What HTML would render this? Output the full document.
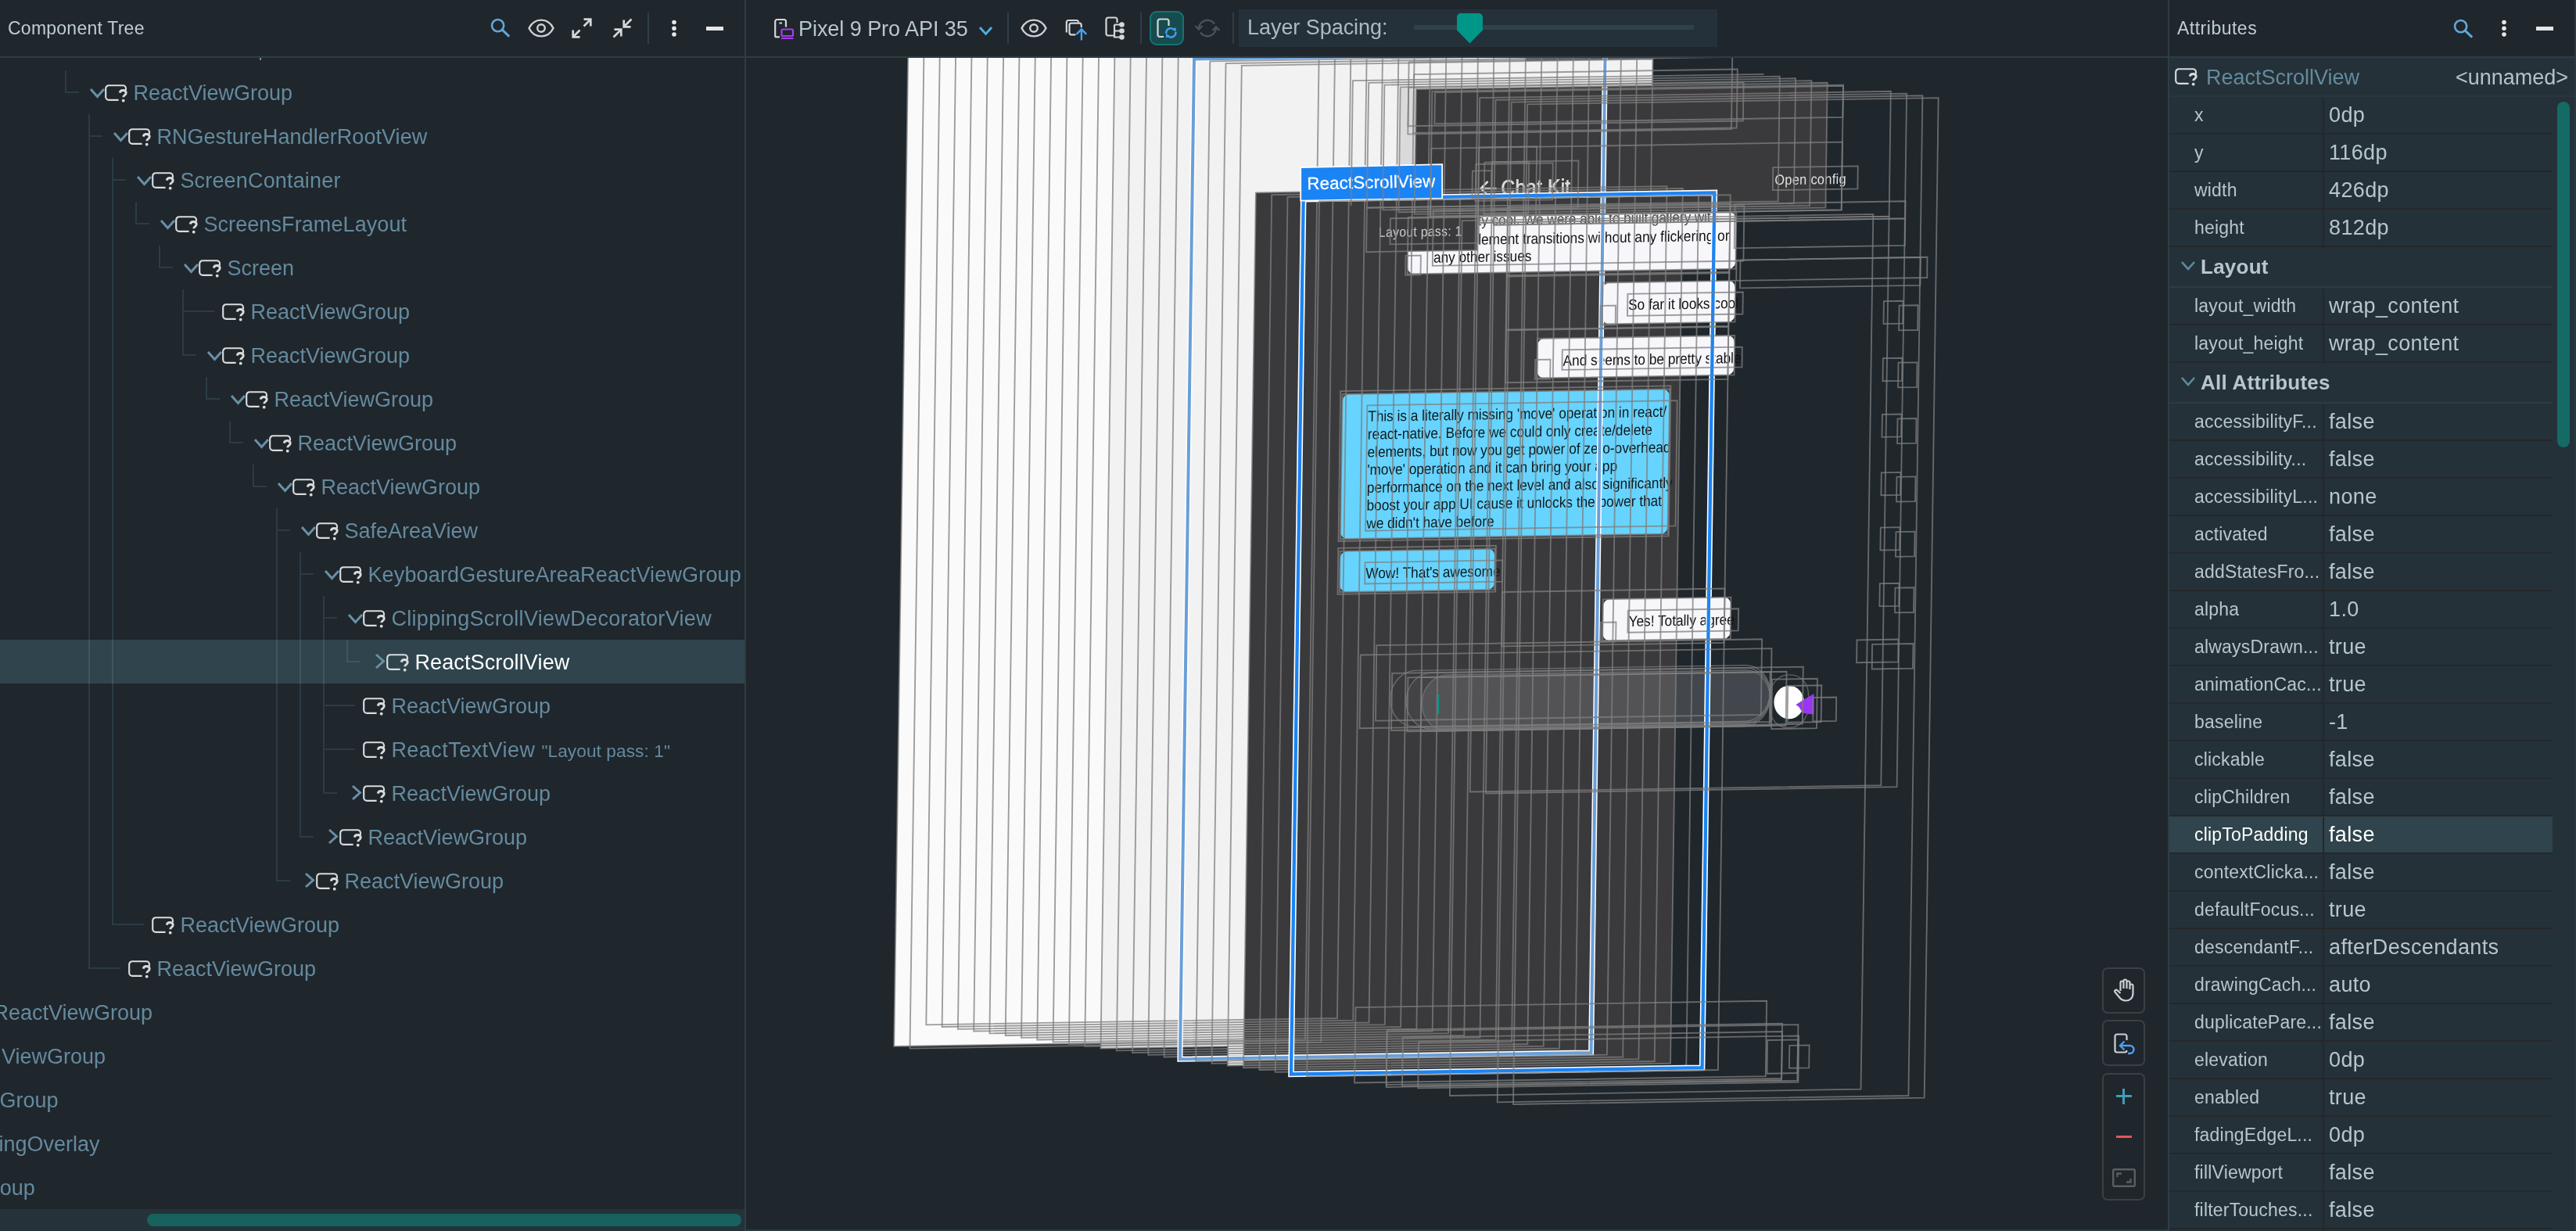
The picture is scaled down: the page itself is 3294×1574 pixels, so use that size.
<!DOCTYPE html><html><head><meta charset="utf-8"><title>Layout Inspector</title><style>

*{box-sizing:border-box;margin:0;padding:0}
html,body{width:3294px;height:1574px;overflow:hidden;background:#1f262c}
body{position:relative;font-family:"Liberation Sans",sans-serif;color:#b3c2ca;font-size:27px;letter-spacing:0}
.abs{position:absolute}
#left{left:0;top:0;width:952px;height:1574px;overflow:hidden}
.hdr{position:absolute;left:0;top:0;height:74px;width:100%;border-bottom:2px solid #2d3d47}
.hdr .t{position:absolute;top:0;line-height:72px;font-size:23px;color:#bfcdd4}
.vdiv{position:absolute;top:0;width:2px;height:1574px;background:#2d3d47}
.row{position:absolute;left:0;width:952px;height:56px;line-height:58px;white-space:nowrap;color:#648a9e}
.row.sel{background:#2f444c;color:#fff}
.row span{position:absolute;top:0}
.row .sm{font-size:22.600px;letter-spacing:.1px}
.gl{position:absolute;background:#2b3c45}
svg{position:absolute;overflow:visible}
#right{left:2774px;top:0;width:520px;height:1574px;background:#243138;overflow:hidden}
#right .hdr{background:#1f262c}
.trow{position:absolute;left:0;width:490px;height:48px;border-bottom:2px solid #26272a}
.trow .n{position:absolute;left:32px;top:0;line-height:46px;font-size:23px;letter-spacing:.2px;white-space:nowrap;color:#b7c5cc}
.trow .v{position:absolute;left:204px;top:0;line-height:46px;font-size:27px;letter-spacing:.36px;white-space:nowrap;color:#b7c5cc}
.trow.sel{background:#2f444c}
.trow.sel .n,.trow.sel .v{color:#fff}
.thead{position:absolute;left:0;width:490px;height:52px;border-bottom:2px solid #2e3b43}
.thead b{position:absolute;left:40px;top:0;line-height:50px;font-size:26px;letter-spacing:.25px;color:#b7c6ce}
.cdiv{position:absolute;left:196px;width:2px;background:#26272a}

</style></head><body><div id="w" style="position:absolute;left:0;top:0;width:3294px;height:1574px;will-change:transform">
<svg style="left:954px;top:74px" width="1818" height="1500" viewBox="954 74 1818 1500">
<defs><clipPath id="cv"><rect x="954" y="74" width="1818" height="1500"/></clipPath></defs>
<g clip-path="url(#cv)">
<defs><clipPath id="tc0"><polygon points="1832.9,266.8 2230.4,260.5 2229.3,341.8 1831.7,348.1"/></clipPath><clipPath id="tc1"><polygon points="2081.4,373.1 2228.8,370.7 2228.3,409.7 2080.9,412.1"/></clipPath><clipPath id="tc2"><polygon points="1997.9,444.5 2227.9,440.9 2227.3,477.5 1997.4,481.2"/></clipPath><clipPath id="tc3"><polygon points="1748.4,515.7 2144.8,509.4 2142.4,680.7 1746,686.9"/></clipPath><clipPath id="tc4"><polygon points="1745.6,716.4 1921.4,713.7 1920.9,752 1745.1,754.7"/></clipPath><clipPath id="tc5"><polygon points="2081.9,777.8 2223.1,775.6 2222.6,814.7 2081.3,816.9"/></clipPath></defs>
<polygon points="1161.8,26.1 1687.4,17.8 1668.9,1329.6 1143.2,1337.9" fill="#fafafa"/>
<polygon points="1425.5,61.9 1951.2,53.6 1933.1,1332.2 1407.5,1340.5" fill="#f2f2f2"/>
<polygon points="1587.8,83.8 2113.5,75.6 2095.4,1354.2 1569.8,1362.5" fill="#f2f2f2"/>
<polygon points="1605.9,246.4 2131.5,238.1 2115.7,1357 1590.1,1365.3" fill="#3a3a3c"/>
<polygon points="1626.2,249.2 2151.8,240.9 2136,1359.7 1610.4,1368" fill="#3a3a3c"/>
<path d="M1809.3 277.9L2211.8 271.5C2216.5 271.4 2220.3 275.7 2220.3 281L2219.5 334.1C2219.4 339.4 2215.5 343.8 2210.7 343.8L1808.3 350.2C1803.5 350.3 1799.7 346 1799.8 340.7L1800.5 287.6C1800.6 282.3 1804.5 277.9 1809.3 277.9Z" fill="#f6f6fb"/>
<path d="M2058.2 361.4L2210.5 359C2215.3 358.9 2219.1 363.2 2219 368.5L2218.5 402C2218.5 407.3 2214.5 411.7 2209.8 411.8L2057.4 414.2C2052.7 414.3 2048.9 410 2048.9 404.7L2049.4 371.2C2049.5 365.9 2053.4 361.5 2058.2 361.4Z" fill="#f6f6fb"/>
<path d="M1974.6 432.8L2209.5 429.1C2214.3 429.1 2218.1 433.3 2218 438.6L2217.6 469.8C2217.5 475.1 2213.6 479.5 2208.8 479.6L1973.9 483.3C1969.2 483.4 1965.4 479.1 1965.4 473.8L1965.9 442.6C1965.9 437.3 1969.9 432.9 1974.6 432.8Z" fill="#f6f6fb"/>
<path d="M1725.2 504L2126.5 497.7C2131.2 497.6 2135 501.9 2134.9 507.2L2132.6 672.9C2132.5 678.3 2128.6 682.7 2123.8 682.7L1722.6 689.1C1717.8 689.1 1714 684.9 1714.1 679.6L1716.4 513.8C1716.5 508.5 1720.4 504.1 1725.2 504Z" fill="#66d4ff"/>
<path d="M1722.4 704.8L1903.1 701.9C1907.9 701.8 1911.7 706.1 1911.6 711.4L1911.1 744.2C1911 749.6 1907.1 753.9 1902.4 754L1721.6 756.9C1716.9 756.9 1713.1 752.7 1713.1 747.3L1713.6 714.6C1713.7 709.2 1717.6 704.8 1722.4 704.8Z" fill="#66d4ff"/>
<path d="M2058.6 766.1L2204.8 763.8C2209.6 763.8 2213.4 768 2213.3 773.3L2212.8 807C2212.8 812.3 2208.8 816.7 2204.1 816.7L2057.9 819.1C2053.1 819.1 2049.3 814.9 2049.4 809.5L2049.9 775.9C2049.9 770.6 2053.9 766.2 2058.6 766.1Z" fill="#f6f6fb"/>
<g clip-path="url(#tc0)"><text transform="matrix(1.232 -0.0194 -0.0194 1.3779 1729.9 103.1)" x="131.7" y="136.3" font-size="14" fill="#444" textLength="249.7" lengthAdjust="spacing" font-family="Liberation Sans,sans-serif">ty cool. We were able to built gallery with</text></g>
<g clip-path="url(#tc0)"><text transform="matrix(1.232 -0.0194 -0.0194 1.3779 1729.9 103.1)" x="124.7" y="154" font-size="14" fill="#111" textLength="268.6" lengthAdjust="spacing" font-family="Liberation Sans,sans-serif">element transitions without any flickering or</text></g>
<g clip-path="url(#tc0)"><text transform="matrix(1.232 -0.0194 -0.0194 1.3779 1729.9 103.1)" x="86.3" y="170.1" font-size="14" fill="#111" font-family="Liberation Sans,sans-serif">any other issues</text></g>
<g clip-path="url(#tc1)"><text transform="matrix(1.232 -0.0194 -0.0194 1.3779 1729.9 103.1)" x="289.3" y="216.8" font-size="14" fill="#111" font-family="Liberation Sans,sans-serif">So far it looks cool</text></g>
<g clip-path="url(#tc2)"><text transform="matrix(1.232 -0.0194 -0.0194 1.3779 1729.9 103.1)" x="222.3" y="267.7" font-size="14" fill="#111" font-family="Liberation Sans,sans-serif">And seems to be pretty stable</text></g>
<g clip-path="url(#tc3)"><text transform="matrix(1.232 -0.0194 -0.0194 1.3779 1729.9 103.1)" x="20.6" y="316.5" font-size="14" fill="#10181c" font-family="Liberation Sans,sans-serif">This is a literally missing 'move' operation in react/</text></g>
<g clip-path="url(#tc3)"><text transform="matrix(1.232 -0.0194 -0.0194 1.3779 1729.9 103.1)" x="20.6" y="333.1" font-size="14" fill="#10181c" font-family="Liberation Sans,sans-serif">react-native. Before we could only create/delete</text></g>
<g clip-path="url(#tc3)"><text transform="matrix(1.232 -0.0194 -0.0194 1.3779 1729.9 103.1)" x="20.6" y="349.6" font-size="14" fill="#10181c" font-family="Liberation Sans,sans-serif">elements, but now you get power of zero-overhead</text></g>
<g clip-path="url(#tc3)"><text transform="matrix(1.232 -0.0194 -0.0194 1.3779 1729.9 103.1)" x="20.6" y="366.1" font-size="14" fill="#10181c" font-family="Liberation Sans,sans-serif">'move' operation and it can bring your app</text></g>
<g clip-path="url(#tc3)"><text transform="matrix(1.232 -0.0194 -0.0194 1.3779 1729.9 103.1)" x="20.6" y="382.7" font-size="14" fill="#10181c" font-family="Liberation Sans,sans-serif">performance on the next level and also significantly</text></g>
<g clip-path="url(#tc3)"><text transform="matrix(1.232 -0.0194 -0.0194 1.3779 1729.9 103.1)" x="20.6" y="399.2" font-size="14" fill="#10181c" font-family="Liberation Sans,sans-serif">boost your app UI cause it unlocks the power that</text></g>
<g clip-path="url(#tc3)"><text transform="matrix(1.232 -0.0194 -0.0194 1.3779 1729.9 103.1)" x="20.6" y="415.8" font-size="14" fill="#10181c" font-family="Liberation Sans,sans-serif">we didn't have before</text></g>
<g clip-path="url(#tc4)"><text transform="matrix(1.232 -0.0194 -0.0194 1.3779 1729.9 103.1)" x="20.6" y="462.2" font-size="14" fill="#10181c" font-family="Liberation Sans,sans-serif">Wow! That's awesome</text></g>
<g clip-path="url(#tc5)"><text transform="matrix(1.232 -0.0194 -0.0194 1.3779 1729.9 103.1)" x="294.3" y="510.6" font-size="14" fill="#111" font-family="Liberation Sans,sans-serif">Yes! Totally agree</text></g>
<polygon points="1747.9,265.7 1889.6,263.4 1888.8,319.9 1747.1,322.2" fill="#3a3a3c"/>
<text transform="matrix(1.232 -0.0194 -0.0194 1.3779 1750.2 105.8)" x="12.500" y="143.300" font-size="12.800" fill="#cfcfcf" font-family="Liberation Sans,sans-serif" letter-spacing=".25">Layout pass: 1</text>
<path d="M1810.3 857.4L2231.8 850.7C2249.4 850.4 2263.5 866.2 2263.2 885.9L2263.2 886.2C2262.9 905.9 2248.4 922.1 2230.8 922.4L1809.2 929C1791.6 929.3 1777.6 913.6 1777.8 893.8L1777.8 893.6C1778.1 873.9 1792.6 857.7 1810.3 857.4Z" fill="none" stroke="#6d6d70" stroke-width="1.300"/>
<polygon points="1790.7,111.3 1812.9,111 1811.5,210.2 1789.3,210.6" fill="#dadadc"/>
<path d="M1830.5 860.1L2231.8 853.8C2249.4 853.5 2263.5 869.3 2263.2 889L2263.2 889.3C2262.9 909 2248.4 925.2 2230.8 925.4L1829.5 931.8C1811.9 932.1 1797.9 916.3 1798.1 896.6L1798.1 896.3C1798.4 876.6 1812.9 860.4 1830.5 860.1Z" fill="rgba(130,130,135,.14)" stroke="#6d6d70" stroke-width="1.300"/>
<polygon points="1811,114.1 2336.7,105.8 2334.4,265.6 1808.8,273.9" fill="#3a3a3c"/>
<path d="M1850.8 862.9L2231.8 856.9C2249.4 856.6 2263.5 872.3 2263.2 892.1L2263.2 892.3C2262.9 912 2248.4 928.2 2230.8 928.5L1849.8 934.5C1832.2 934.8 1818.1 919.1 1818.4 899.3L1818.4 899.1C1818.7 879.4 1833.2 863.2 1850.8 862.9Z" fill="rgba(130,130,135,.26)" stroke="#6d6d70" stroke-width="1.300"/>
<path d="M2287 862.9L2289.5 862.8C2302.4 862.6 2312.7 874.2 2312.5 888.7L2312.3 903.8C2312.1 918.3 2301.4 930.2 2288.5 930.4L2286 930.4C2273.1 930.6 2262.8 919.1 2263 904.6L2263.2 889.4C2263.4 875 2274.1 863.1 2287 862.9Z" fill="none" stroke="#606063" stroke-width="1.300"/>
<path d="M1839.5 887.9L1839.2 912.7" stroke="#009688" stroke-width="2"/>
<ellipse cx="2287.7" cy="898" rx="19.300" ry="21.300" fill="#fff"/>
<path d="M2319.4 887L2319.4 913.5L2305.4 912L2300.4 904L2296.4 901L2304.4 896Z" fill="#9b35f5"/>
<text transform="matrix(1.232 -0.0194 -0.0194 1.3779 1851.6 119.6)" x="340.400" y="89.500" font-size="13.300" fill="#e0e0e0" font-family="Liberation Sans,sans-serif" letter-spacing=".25">Open config</text>
<text transform="matrix(1.232 -0.0194 -0.0194 1.3779 1871.9 122.3)" x="40" y="92.900" font-size="20" fill="#dcdcdc" stroke="#dcdcdc" stroke-width=".5" font-family="Liberation Sans,sans-serif" letter-spacing=".1">Chat Kit</text>
<path d="M1913.6 241H1893.6M1902.6 232L1893.6 241L1902.6 250" fill="none" stroke="#dcdcdc" stroke-width="2.500"/>
<g fill="none" stroke="#7e7e7e" stroke-opacity=".77" stroke-width="1.850"><polygon points="1161.8,26.1 1687.4,17.8 1668.9,1329.6 1143.2,1337.9"/><polygon points="1182,28.9 1707.7,20.6 1689.2,1332.3 1163.5,1340.6"/><polygon points="1202.3,31.6 1728,23.3 1709.9,1302 1184.3,1310.3"/><polygon points="1222.6,34.4 1748.3,26.1 1730.2,1304.7 1204.6,1313"/><polygon points="1242.9,37.1 1768.6,28.8 1750.5,1307.5 1224.9,1315.8"/><polygon points="1263.2,39.9 1788.9,31.6 1770.8,1310.2 1245.2,1318.5"/><polygon points="1283.5,42.6 1809.1,34.3 1791.1,1313 1265.4,1321.3"/><polygon points="1303.8,45.4 1829.4,37.1 1811.4,1315.7 1285.7,1324"/><polygon points="1324.1,48.1 1849.7,39.8 1831.7,1318.5 1306,1326.8"/><polygon points="1344.4,50.9 1870,42.6 1852,1321.2 1326.3,1329.5"/><polygon points="1364.7,53.6 1890.3,45.3 1872.3,1324 1346.6,1332.3"/><polygon points="1384.9,56.4 1910.6,48.1 1892.5,1326.7 1366.9,1335"/><polygon points="1405.2,59.1 1930.9,50.8 1912.8,1329.5 1387.2,1337.8"/><polygon points="1425.5,61.9 1951.2,53.6 1933.1,1332.2 1407.5,1340.5"/><polygon points="1445.8,64.6 1971.5,56.3 1953.4,1335 1427.8,1343.3"/><polygon points="1466.1,67.3 1991.8,59.1 1973.7,1337.7 1448.1,1346"/><polygon points="1486.4,70.1 2012,61.8 1994,1340.5 1468.3,1348.8"/><polygon points="1506.7,72.8 2032.3,64.6 2014.3,1343.2 1488.6,1351.5"/><polygon points="1527,75.6 2052.6,67.3 2034.6,1346 1508.9,1354.3"/></g>
<polygon points="1527,75.6 2052.6,67.3 2034.6,1346 1508.9,1354.3" fill="none" stroke="#fff" stroke-width="7"/>
<polygon points="1527,75.6 2052.6,67.3 2034.6,1346 1508.9,1354.3" fill="none" stroke="#6a9fd8" stroke-width="4"/>
<g fill="none" stroke="#7e7e7e" stroke-opacity=".77" stroke-width="1.850"><polygon points="1547.3,78.3 2072.9,70.1 2054.9,1348.7 1529.2,1357"/><polygon points="1567.5,81.1 2093.2,72.8 2075.2,1351.5 1549.5,1359.8"/><polygon points="1587.8,83.8 2113.5,75.6 2095.4,1354.2 1569.8,1362.5"/><polygon points="1605.9,246.4 2131.5,238.1 2115.7,1357 1590.1,1365.3"/><polygon points="1626.2,249.2 2151.8,240.9 2136,1359.7 1610.4,1368"/><polygon points="1646.5,251.9 2172.1,243.6 2156.3,1362.5 1630.7,1370.8"/><polygon points="1666.7,254.7 2192.4,246.4 2176.6,1365.2 1651,1373.5"/></g>
<polygon points="1666.7,254.7 2192.4,246.4 2176.6,1365.2 1651,1373.5" fill="none" stroke="#fff" stroke-width="7.500"/>
<polygon points="1666.7,254.7 2192.4,246.4 2176.6,1365.2 1651,1373.5" fill="none" stroke="#1b84f5" stroke-width="4.300"/>
<path d="M1663.2 256.7L1663.2 214.2L1844.2 210.2L1844.2 253.7Z" fill="#1b84f5" stroke="#fff" stroke-width="1.800"/>
<text x="1671.7" y="242.4" transform="rotate(-1.100 1663.2 252.7)" font-size="22.200" fill="#fff" stroke="#fff" stroke-width=".3" font-family="Liberation Sans,sans-serif" letter-spacing=".2">ReactScrollView</text>
<g fill="none" stroke="#7e7e7e" stroke-opacity=".77" stroke-width="1.850"><polygon points="1687,257.4 2212.7,249.1 2196.9,1368 1671.2,1376.3"/><polygon points="1801.6,79.3 2215.2,72.8 2213.9,165.1 1800.3,171.6"/><polygon points="1928.4,264.6 2212.5,260.2 2211.3,349 1927.1,353.5"/><polygon points="1927.1,352.1 2211.3,347.7 2210.3,417 1926.1,421.5"/><polygon points="1926.1,422.3 2210.3,417.8 2209.4,484.8 1925.2,489.2"/><polygon points="1921.4,757 2205.6,752.5 2204.6,821.9 1920.4,826.4"/><polygon points="1808.2,95.1 2221.8,88.5 2220.7,163.5 1807.1,170"/><polygon points="1797.5,327 1816.9,326.6 1816.5,351.4 1797.2,351.8"/><polygon points="1800.7,278 2220.4,271.4 2219.4,343.7 1799.7,350.3"/><polygon points="2046.7,390.9 2066,390.6 2065.7,415.4 2046.3,415.7"/><polygon points="2049.5,361.5 2219.2,358.9 2218.4,411.6 2048.8,414.3"/><polygon points="1963.2,460 1982.5,459.7 1982.2,484.5 1962.8,484.8"/><polygon points="1966,433 2218.2,429 2217.5,479.4 1965.3,483.4"/><polygon points="1714.2,500.1 2136.4,493.4 2133.7,685.3 1711.5,692"/><polygon points="1716.6,504.1 2135.1,497.5 2132.5,682.6 1714,689.2"/><polygon points="1711.3,700.8 1913,697.6 1912.2,756.6 1710.5,759.8"/><polygon points="1713.7,704.9 1911.7,701.8 1911,753.9 1713,757"/><polygon points="2047.1,795.8 2066.5,795.5 2066.1,820.3 2046.8,820.6"/><polygon points="2050,766.3 2213.4,763.7 2212.7,816.6 2049.2,819.2"/><polyline points="1727.6,262.9 1729.9,103.1 2255.5,94.8"/><polygon points="1801.2,112 2229.6,105.3 2228.9,154.5 1800.5,161.2"/><polygon points="1832.8,269.5 2230.4,263.3 2229.4,333.5 1831.8,339.8"/><polygon points="2081.4,375.8 2228.8,373.5 2228.4,401.5 2081,403.8"/><polygon points="1997.8,447.3 2227.8,443.6 2227.5,469.3 1997.5,472.9"/><polygon points="1748.4,518.4 2144.7,512.2 2142.5,672.4 1746.1,678.7"/><polygon points="1745.6,719.2 1921.4,716.4 1921,743.7 1745.2,746.5"/><polygon points="2081.8,780.6 2223.1,778.3 2222.7,806.4 2081.4,808.7"/><polygon points="1750.2,105.8 2275.8,97.6 2273.6,257.4 1747.9,265.7"/><polygon points="1733.5,1288.1 2259.1,1279.8 2257.8,1376.2 1732.1,1384.5"/><polygon points="1747.9,265.7 1889.6,263.4 1888.8,319.9 1747.1,322.2"/><polygon points="1739.8,837.5 2265.5,829.2 2264.2,922.9 1738.5,931.2"/><polygon points="1770.4,108.6 2296.1,100.3 2293.9,260.1 1768.2,268.4"/><polygon points="1773.7,1316.7 2279,1308.7 2278.1,1379 1772.7,1387"/><polygon points="1777.9,279.3 1891.2,277.5 1890.8,310.6 1777.4,312.4"/><polygon points="1760.3,825.1 2253.1,817.3 2251.8,913.8 1759,921.6"/><polygon points="1790.7,111.3 2316.4,103.1 2314.1,262.9 1788.5,271.2"/><polygon points="1773.7,1318.4 2299.4,1310.1 2298.3,1381.7 1772.7,1390"/><polygon points="2260.1,1330 2299.1,1329.4 2298.5,1372.1 2259.5,1372.7"/><polygon points="1780.2,860.9 2305.8,852.6 2304.8,925.7 1779.1,934"/><polygon points="1811,114.1 2336.7,105.8 2334.4,265.6 1808.8,273.9"/><polygon points="1793.9,1326.7 2279,1319 2278.1,1381 1793,1388.7"/><polygon points="2288.3,1336.8 2313.6,1336.4 2313.2,1365.3 2287.9,1365.7"/><polygon points="1800.4,866.4 2284.6,858.8 2283.6,927.7 1799.4,935.3"/><polygon points="1817.7,866.2 2263.6,859.1 2262.7,928 1816.7,935.1"/><polygon points="2266,868.7 2323.9,867.8 2323,931.2 2265.1,932.1"/><polygon points="1831.3,116.8 2357,108.6 2354.7,268.4 1829.1,276.7"/><polygon points="1814.2,1332.2 2300.2,1324.5 2299.4,1383.7 1813.3,1391.4"/><polygon points="1835,118.2 2357,109.9 2356.4,149.9 1834.4,158.1"/><polygon points="1830.3,189.9 2355.9,181.6 2354.7,268.4 1829.1,276.7"/><polygon points="2286.2,877 2329.3,876.3 2328.6,923.2 2285.5,923.8"/><polygon points="1887.3,210 1985.8,208.4 1985.2,255.3 1886.6,256.8"/><polygon points="2267.3,214.2 2375.8,212.4 2375.4,241.4 2266.9,243.1"/><polygon points="2318.6,891.9 2348.2,891.5 2347.8,921.8 2318.2,922.3"/><polygon points="1869.6,282.2 2395.3,273.9 2379.5,1392.7 1853.9,1401"/><polygon points="1907.7,207.2 2018.5,205.4 2017.7,266.1 1906.8,267.8"/><polygon points="1882.9,218.6 1907.5,218.2 1907,254 1882.4,254.4"/><polygon points="1892.2,125.1 2417.8,116.8 2415.6,276.6 1889.9,284.9"/><polygon points="1889.9,284.9 2415.6,276.6 2405.3,1004.2 1879.7,1012.5"/><polygon points="1891.3,188.5 1965.2,187.3 1963.9,283.8 1889.9,284.9"/><polygon points="1898.4,207.7 1955.1,206.8 1954.2,272.9 1897.5,273.8"/><polygon points="1912.5,127.8 2438.1,119.6 2435.9,279.4 1910.2,287.7"/><polygon points="1910.2,287.7 2435.9,279.4 2425.6,1006.2 1900,1014.5"/><polygon points="2408.9,385.2 2433.6,384.8 2433.2,413.7 2408.5,414.1"/><polygon points="2407.9,458.2 2432.5,457.8 2432.1,486.8 2407.5,487.2"/><polygon points="2406.9,529.9 2431.5,529.5 2431.1,558.4 2406.5,558.8"/><polygon points="2405.8,604.3 2430.5,603.9 2430.1,632.8 2405.4,633.2"/><polygon points="2404.8,674.6 2429.5,674.2 2429.1,703.1 2404.4,703.5"/><polygon points="2403.8,746.2 2428.5,745.8 2428.1,774.8 2403.4,775.1"/><polygon points="2374.5,818.3 2427.5,817.5 2427.1,846.4 2374.1,847.2"/><polygon points="2218.5,260.8 2436.6,257.3 2435.8,313.8 2217.7,317.3"/><polygon points="1932.8,130.6 2458.4,122.3 2440.4,1401 1914.7,1409.3"/><polygon points="2428.6,390.7 2452.6,390.3 2452.1,422 2428.1,422.4"/><polygon points="2427.5,463.7 2451.6,463.4 2451.1,495.1 2427.1,495.4"/><polygon points="2426.5,535.4 2450.5,535 2450.1,566.7 2426.1,567.1"/><polygon points="2425.5,609.8 2449.5,609.4 2449,641.1 2425,641.5"/><polygon points="2424.5,680.1 2448.5,679.7 2448.1,711.4 2424,711.8"/><polygon points="2423.5,751.7 2447.5,751.3 2447,783 2423,783.4"/><polygon points="2394.1,823.8 2446.5,823 2446,854.7 2393.7,855.5"/><polygon points="2220.6,332.7 2464.5,328.8 2464.2,355 2220.2,358.9"/><polygon points="2225.5,332.6 2455.9,329 2455.4,364.8 2225,368.4"/><polygon points="1953.1,133.3 2478.7,125.1 2460.7,1403.7 1935,1412"/></g>
</g></svg>
<div id="left" class="abs">
<div class="hdr"><span class="t" style="left:10px;letter-spacing:.24px">Component Tree</span>
<svg style="left:627px;top:23px" width="26" height="26" viewBox="0 0 26 26"><circle cx="9.6" cy="9.6" r="7.6" fill="none" stroke="#5fa9d6" stroke-width="2.6"/><path d="M15.2 15.2L24.2 23.6" stroke="#5fa9d6" stroke-width="3" fill="none"/></svg>
<svg style="left:675px;top:24px" width="34" height="24" viewBox="0 0 34 24"><path d="M1.500 12C5 4.800 10.500 1.600 17 1.600S29 4.800 32.500 12C29 19.200 23.500 22.400 17 22.400S5 19.200 1.500 12Z" fill="none" stroke="#ced0d6" stroke-width="2.4"/><circle cx="17" cy="12" r="4.800" fill="none" stroke="#ced0d6" stroke-width="2.4"/></svg>
<svg style="left:731px;top:23px" width="26" height="26" viewBox="0 0 26 26"><g fill="none" stroke="#d5d7da" stroke-width="2.400"><path d="M15.500 10.500L24 2M15.500 1.700H24.300V10.500" stroke-width="2.700"/><path d="M10.500 15.500L2 24M1.700 15.500V24.300H10.500" stroke-width="2.700"/></g></svg>
<svg style="left:783px;top:23px" width="26" height="26" viewBox="0 0 26 26"><g fill="none" stroke="#d5d7da" stroke-width="2.400"><path d="M24.500 1.500L15 11M14.700 2.500V11.300H23.500" stroke-width="2.700"/><path d="M1.500 24.500L11 15M2.500 14.700H11.300V23.500" stroke-width="2.700"/></g></svg>
<div class="abs" style="left:828px;top:16px;width:2px;height:40px;background:#2f3e48"></div>
<svg style="left:858px;top:24px" width="8" height="26" viewBox="0 0 8 26"><circle cx="4" cy="4.500" r="2.800" fill="#e4e6e8"/><circle cx="4" cy="12.200" r="2.800" fill="#e4e6e8"/><circle cx="4" cy="20" r="2.800" fill="#e4e6e8"/></svg>
<div class="abs" style="left:903px;top:33.500px;width:22px;height:5px;background:#e4e6e8"></div>
</div>
<div class="row" style="top:90px">
<span style="left:170.4px">ReactViewGroup</span>
</div>
<svg style="left:114px;top:112px" width="21" height="14.5" viewBox="-2 -2 21 14.5"><path d="M0 0L8.5 9.5L17 0" fill="none" stroke="#6890a6" stroke-width="3"/></svg>
<svg style="left:133.8px;top:107.9px" width="30" height="24" viewBox="0 0 30 24"><path d="M27 7.2V5.2a4 4 0 0 0-4-4H5.2a4 4 0 0 0-4 4v10.6a4 4 0 0 0 4 4H17.6" fill="none" stroke="#d9dbdd" stroke-width="2.150"/><path d="M19.2 10.6c.4-2 2-3.1 4-3.1 2.300 0 4 1.300 4 3.300 0 1.500-.8 2.300-2 3.100-1 .7-1.400 1.200-1.400 2.400" fill="none" stroke="#d9dbdd" stroke-width="2.900"/><circle cx="23.700" cy="20.700" r="1.900" fill="#d9dbdd"/></svg>
<div class="row" style="top:146px">
<span style="left:200.4px;letter-spacing:0.05px">RNGestureHandlerRootView</span>
</div>
<svg style="left:144px;top:168px" width="21" height="14.5" viewBox="-2 -2 21 14.5"><path d="M0 0L8.5 9.5L17 0" fill="none" stroke="#6890a6" stroke-width="3"/></svg>
<svg style="left:163.8px;top:163.9px" width="30" height="24" viewBox="0 0 30 24"><path d="M27 7.2V5.2a4 4 0 0 0-4-4H5.2a4 4 0 0 0-4 4v10.6a4 4 0 0 0 4 4H17.6" fill="none" stroke="#d9dbdd" stroke-width="2.150"/><path d="M19.2 10.6c.4-2 2-3.1 4-3.1 2.300 0 4 1.300 4 3.300 0 1.500-.8 2.300-2 3.100-1 .7-1.400 1.200-1.400 2.400" fill="none" stroke="#d9dbdd" stroke-width="2.900"/><circle cx="23.700" cy="20.700" r="1.900" fill="#d9dbdd"/></svg>
<div class="row" style="top:202px">
<span style="left:230.4px;letter-spacing:0.17px">ScreenContainer</span>
</div>
<svg style="left:174px;top:224px" width="21" height="14.5" viewBox="-2 -2 21 14.5"><path d="M0 0L8.5 9.5L17 0" fill="none" stroke="#6890a6" stroke-width="3"/></svg>
<svg style="left:193.8px;top:219.9px" width="30" height="24" viewBox="0 0 30 24"><path d="M27 7.2V5.2a4 4 0 0 0-4-4H5.2a4 4 0 0 0-4 4v10.6a4 4 0 0 0 4 4H17.6" fill="none" stroke="#d9dbdd" stroke-width="2.150"/><path d="M19.2 10.6c.4-2 2-3.1 4-3.1 2.300 0 4 1.300 4 3.300 0 1.500-.8 2.300-2 3.100-1 .7-1.400 1.200-1.400 2.400" fill="none" stroke="#d9dbdd" stroke-width="2.900"/><circle cx="23.700" cy="20.700" r="1.900" fill="#d9dbdd"/></svg>
<div class="row" style="top:258px">
<span style="left:260.4px;letter-spacing:0.09px">ScreensFrameLayout</span>
</div>
<svg style="left:204px;top:280px" width="21" height="14.5" viewBox="-2 -2 21 14.5"><path d="M0 0L8.5 9.5L17 0" fill="none" stroke="#6890a6" stroke-width="3"/></svg>
<svg style="left:223.8px;top:275.9px" width="30" height="24" viewBox="0 0 30 24"><path d="M27 7.2V5.2a4 4 0 0 0-4-4H5.2a4 4 0 0 0-4 4v10.6a4 4 0 0 0 4 4H17.6" fill="none" stroke="#d9dbdd" stroke-width="2.150"/><path d="M19.2 10.6c.4-2 2-3.1 4-3.1 2.300 0 4 1.300 4 3.300 0 1.500-.8 2.300-2 3.100-1 .7-1.400 1.200-1.400 2.400" fill="none" stroke="#d9dbdd" stroke-width="2.900"/><circle cx="23.700" cy="20.700" r="1.900" fill="#d9dbdd"/></svg>
<div class="row" style="top:314px">
<span style="left:290.4px">Screen</span>
</div>
<svg style="left:234px;top:336px" width="21" height="14.5" viewBox="-2 -2 21 14.5"><path d="M0 0L8.5 9.5L17 0" fill="none" stroke="#6890a6" stroke-width="3"/></svg>
<svg style="left:253.8px;top:331.9px" width="30" height="24" viewBox="0 0 30 24"><path d="M27 7.2V5.2a4 4 0 0 0-4-4H5.2a4 4 0 0 0-4 4v10.6a4 4 0 0 0 4 4H17.6" fill="none" stroke="#d9dbdd" stroke-width="2.150"/><path d="M19.2 10.6c.4-2 2-3.1 4-3.1 2.300 0 4 1.300 4 3.300 0 1.500-.8 2.300-2 3.100-1 .7-1.400 1.200-1.400 2.400" fill="none" stroke="#d9dbdd" stroke-width="2.900"/><circle cx="23.700" cy="20.700" r="1.900" fill="#d9dbdd"/></svg>
<div class="row" style="top:370px">
<span style="left:320.4px">ReactViewGroup</span>
</div>
<svg style="left:283.8px;top:387.9px" width="30" height="24" viewBox="0 0 30 24"><path d="M27 7.2V5.2a4 4 0 0 0-4-4H5.2a4 4 0 0 0-4 4v10.6a4 4 0 0 0 4 4H17.6" fill="none" stroke="#d9dbdd" stroke-width="2.150"/><path d="M19.2 10.6c.4-2 2-3.1 4-3.1 2.300 0 4 1.300 4 3.300 0 1.500-.8 2.300-2 3.100-1 .7-1.400 1.200-1.400 2.400" fill="none" stroke="#d9dbdd" stroke-width="2.900"/><circle cx="23.700" cy="20.700" r="1.900" fill="#d9dbdd"/></svg>
<div class="row" style="top:426px">
<span style="left:320.4px">ReactViewGroup</span>
</div>
<svg style="left:264px;top:448px" width="21" height="14.5" viewBox="-2 -2 21 14.5"><path d="M0 0L8.5 9.5L17 0" fill="none" stroke="#6890a6" stroke-width="3"/></svg>
<svg style="left:283.8px;top:443.9px" width="30" height="24" viewBox="0 0 30 24"><path d="M27 7.2V5.2a4 4 0 0 0-4-4H5.2a4 4 0 0 0-4 4v10.6a4 4 0 0 0 4 4H17.6" fill="none" stroke="#d9dbdd" stroke-width="2.150"/><path d="M19.2 10.6c.4-2 2-3.1 4-3.1 2.300 0 4 1.300 4 3.300 0 1.500-.8 2.300-2 3.100-1 .7-1.400 1.200-1.400 2.400" fill="none" stroke="#d9dbdd" stroke-width="2.900"/><circle cx="23.700" cy="20.700" r="1.900" fill="#d9dbdd"/></svg>
<div class="row" style="top:482px">
<span style="left:350.4px">ReactViewGroup</span>
</div>
<svg style="left:294px;top:504px" width="21" height="14.5" viewBox="-2 -2 21 14.5"><path d="M0 0L8.5 9.5L17 0" fill="none" stroke="#6890a6" stroke-width="3"/></svg>
<svg style="left:313.8px;top:499.9px" width="30" height="24" viewBox="0 0 30 24"><path d="M27 7.2V5.2a4 4 0 0 0-4-4H5.2a4 4 0 0 0-4 4v10.6a4 4 0 0 0 4 4H17.6" fill="none" stroke="#d9dbdd" stroke-width="2.150"/><path d="M19.2 10.6c.4-2 2-3.1 4-3.1 2.300 0 4 1.300 4 3.300 0 1.500-.8 2.300-2 3.100-1 .7-1.400 1.200-1.400 2.400" fill="none" stroke="#d9dbdd" stroke-width="2.900"/><circle cx="23.700" cy="20.700" r="1.900" fill="#d9dbdd"/></svg>
<div class="row" style="top:538px">
<span style="left:380.4px">ReactViewGroup</span>
</div>
<svg style="left:324px;top:560px" width="21" height="14.5" viewBox="-2 -2 21 14.5"><path d="M0 0L8.5 9.5L17 0" fill="none" stroke="#6890a6" stroke-width="3"/></svg>
<svg style="left:343.8px;top:555.9px" width="30" height="24" viewBox="0 0 30 24"><path d="M27 7.2V5.2a4 4 0 0 0-4-4H5.2a4 4 0 0 0-4 4v10.6a4 4 0 0 0 4 4H17.6" fill="none" stroke="#d9dbdd" stroke-width="2.150"/><path d="M19.2 10.6c.4-2 2-3.1 4-3.1 2.300 0 4 1.300 4 3.300 0 1.500-.8 2.300-2 3.100-1 .7-1.400 1.200-1.400 2.400" fill="none" stroke="#d9dbdd" stroke-width="2.900"/><circle cx="23.700" cy="20.700" r="1.900" fill="#d9dbdd"/></svg>
<div class="row" style="top:594px">
<span style="left:410.4px">ReactViewGroup</span>
</div>
<svg style="left:354px;top:616px" width="21" height="14.5" viewBox="-2 -2 21 14.5"><path d="M0 0L8.5 9.5L17 0" fill="none" stroke="#6890a6" stroke-width="3"/></svg>
<svg style="left:373.8px;top:611.9px" width="30" height="24" viewBox="0 0 30 24"><path d="M27 7.2V5.2a4 4 0 0 0-4-4H5.2a4 4 0 0 0-4 4v10.6a4 4 0 0 0 4 4H17.6" fill="none" stroke="#d9dbdd" stroke-width="2.150"/><path d="M19.2 10.6c.4-2 2-3.1 4-3.1 2.300 0 4 1.300 4 3.300 0 1.500-.8 2.300-2 3.100-1 .7-1.400 1.200-1.400 2.400" fill="none" stroke="#d9dbdd" stroke-width="2.900"/><circle cx="23.700" cy="20.700" r="1.900" fill="#d9dbdd"/></svg>
<div class="row" style="top:650px">
<span style="left:440.4px">SafeAreaView</span>
</div>
<svg style="left:384px;top:672px" width="21" height="14.5" viewBox="-2 -2 21 14.5"><path d="M0 0L8.5 9.5L17 0" fill="none" stroke="#6890a6" stroke-width="3"/></svg>
<svg style="left:403.8px;top:667.9px" width="30" height="24" viewBox="0 0 30 24"><path d="M27 7.2V5.2a4 4 0 0 0-4-4H5.2a4 4 0 0 0-4 4v10.6a4 4 0 0 0 4 4H17.6" fill="none" stroke="#d9dbdd" stroke-width="2.150"/><path d="M19.2 10.6c.4-2 2-3.1 4-3.1 2.300 0 4 1.300 4 3.300 0 1.500-.8 2.300-2 3.100-1 .7-1.400 1.200-1.400 2.400" fill="none" stroke="#d9dbdd" stroke-width="2.900"/><circle cx="23.700" cy="20.700" r="1.900" fill="#d9dbdd"/></svg>
<div class="row" style="top:706px">
<span style="left:470.4px;letter-spacing:0.16px">KeyboardGestureAreaReactViewGroup</span>
</div>
<svg style="left:414px;top:728px" width="21" height="14.5" viewBox="-2 -2 21 14.5"><path d="M0 0L8.5 9.5L17 0" fill="none" stroke="#6890a6" stroke-width="3"/></svg>
<svg style="left:433.8px;top:723.9px" width="30" height="24" viewBox="0 0 30 24"><path d="M27 7.2V5.2a4 4 0 0 0-4-4H5.2a4 4 0 0 0-4 4v10.6a4 4 0 0 0 4 4H17.6" fill="none" stroke="#d9dbdd" stroke-width="2.150"/><path d="M19.2 10.6c.4-2 2-3.1 4-3.1 2.300 0 4 1.300 4 3.300 0 1.500-.8 2.300-2 3.100-1 .7-1.400 1.200-1.400 2.400" fill="none" stroke="#d9dbdd" stroke-width="2.900"/><circle cx="23.700" cy="20.700" r="1.900" fill="#d9dbdd"/></svg>
<div class="row" style="top:762px">
<span style="left:500.4px;letter-spacing:0.32px">ClippingScrollViewDecoratorView</span>
</div>
<svg style="left:444px;top:784px" width="21" height="14.5" viewBox="-2 -2 21 14.5"><path d="M0 0L8.5 9.5L17 0" fill="none" stroke="#6890a6" stroke-width="3"/></svg>
<svg style="left:463.8px;top:779.9px" width="30" height="24" viewBox="0 0 30 24"><path d="M27 7.2V5.2a4 4 0 0 0-4-4H5.2a4 4 0 0 0-4 4v10.6a4 4 0 0 0 4 4H17.6" fill="none" stroke="#d9dbdd" stroke-width="2.150"/><path d="M19.2 10.6c.4-2 2-3.1 4-3.1 2.300 0 4 1.300 4 3.300 0 1.500-.8 2.300-2 3.100-1 .7-1.400 1.200-1.400 2.400" fill="none" stroke="#d9dbdd" stroke-width="2.900"/><circle cx="23.700" cy="20.700" r="1.900" fill="#d9dbdd"/></svg>
<div class="row sel" style="top:818px">
<span style="left:530.4px;letter-spacing:0.13px">ReactScrollView</span>
</div>
<svg style="left:479px;top:835px" width="14.5" height="21" viewBox="-2 -2 14.5 21"><path d="M0 0L9.5 8.5L0 17" fill="none" stroke="#6890a6" stroke-width="3"/></svg>
<svg style="left:493.8px;top:835.9px" width="30" height="24" viewBox="0 0 30 24"><path d="M27 7.2V5.2a4 4 0 0 0-4-4H5.2a4 4 0 0 0-4 4v10.6a4 4 0 0 0 4 4H17.6" fill="none" stroke="#d9dbdd" stroke-width="2.150"/><path d="M19.2 10.6c.4-2 2-3.1 4-3.1 2.300 0 4 1.300 4 3.300 0 1.500-.8 2.300-2 3.100-1 .7-1.400 1.200-1.400 2.400" fill="none" stroke="#d9dbdd" stroke-width="2.900"/><circle cx="23.700" cy="20.700" r="1.900" fill="#d9dbdd"/></svg>
<div class="row" style="top:874px">
<span style="left:500.4px">ReactViewGroup</span>
</div>
<svg style="left:463.8px;top:891.9px" width="30" height="24" viewBox="0 0 30 24"><path d="M27 7.2V5.2a4 4 0 0 0-4-4H5.2a4 4 0 0 0-4 4v10.6a4 4 0 0 0 4 4H17.6" fill="none" stroke="#d9dbdd" stroke-width="2.150"/><path d="M19.2 10.6c.4-2 2-3.1 4-3.1 2.300 0 4 1.300 4 3.300 0 1.500-.8 2.300-2 3.100-1 .7-1.400 1.200-1.400 2.400" fill="none" stroke="#d9dbdd" stroke-width="2.900"/><circle cx="23.700" cy="20.700" r="1.900" fill="#d9dbdd"/></svg>
<div class="row" style="top:930px">
<span style="left:500.4px;letter-spacing:.46px">ReactTextView <span class="sm" style="position:static">"Layout pass: 1"</span></span>
</div>
<svg style="left:463.8px;top:947.9px" width="30" height="24" viewBox="0 0 30 24"><path d="M27 7.2V5.2a4 4 0 0 0-4-4H5.2a4 4 0 0 0-4 4v10.6a4 4 0 0 0 4 4H17.6" fill="none" stroke="#d9dbdd" stroke-width="2.150"/><path d="M19.2 10.6c.4-2 2-3.1 4-3.1 2.300 0 4 1.300 4 3.300 0 1.500-.8 2.300-2 3.100-1 .7-1.400 1.200-1.400 2.400" fill="none" stroke="#d9dbdd" stroke-width="2.900"/><circle cx="23.700" cy="20.700" r="1.900" fill="#d9dbdd"/></svg>
<div class="row" style="top:986px">
<span style="left:500.4px">ReactViewGroup</span>
</div>
<svg style="left:449px;top:1003px" width="14.5" height="21" viewBox="-2 -2 14.5 21"><path d="M0 0L9.5 8.5L0 17" fill="none" stroke="#6890a6" stroke-width="3"/></svg>
<svg style="left:463.8px;top:1003.9px" width="30" height="24" viewBox="0 0 30 24"><path d="M27 7.2V5.2a4 4 0 0 0-4-4H5.2a4 4 0 0 0-4 4v10.6a4 4 0 0 0 4 4H17.6" fill="none" stroke="#d9dbdd" stroke-width="2.150"/><path d="M19.2 10.6c.4-2 2-3.1 4-3.1 2.300 0 4 1.300 4 3.300 0 1.500-.8 2.300-2 3.100-1 .7-1.400 1.200-1.400 2.400" fill="none" stroke="#d9dbdd" stroke-width="2.900"/><circle cx="23.700" cy="20.700" r="1.900" fill="#d9dbdd"/></svg>
<div class="row" style="top:1042px">
<span style="left:470.4px">ReactViewGroup</span>
</div>
<svg style="left:419px;top:1059px" width="14.5" height="21" viewBox="-2 -2 14.5 21"><path d="M0 0L9.5 8.5L0 17" fill="none" stroke="#6890a6" stroke-width="3"/></svg>
<svg style="left:433.8px;top:1059.9px" width="30" height="24" viewBox="0 0 30 24"><path d="M27 7.2V5.2a4 4 0 0 0-4-4H5.2a4 4 0 0 0-4 4v10.6a4 4 0 0 0 4 4H17.6" fill="none" stroke="#d9dbdd" stroke-width="2.150"/><path d="M19.2 10.6c.4-2 2-3.1 4-3.1 2.300 0 4 1.300 4 3.300 0 1.500-.8 2.300-2 3.100-1 .7-1.400 1.200-1.400 2.400" fill="none" stroke="#d9dbdd" stroke-width="2.900"/><circle cx="23.700" cy="20.700" r="1.900" fill="#d9dbdd"/></svg>
<div class="row" style="top:1098px">
<span style="left:440.4px">ReactViewGroup</span>
</div>
<svg style="left:389px;top:1115px" width="14.5" height="21" viewBox="-2 -2 14.5 21"><path d="M0 0L9.5 8.5L0 17" fill="none" stroke="#6890a6" stroke-width="3"/></svg>
<svg style="left:403.8px;top:1115.9px" width="30" height="24" viewBox="0 0 30 24"><path d="M27 7.2V5.2a4 4 0 0 0-4-4H5.2a4 4 0 0 0-4 4v10.6a4 4 0 0 0 4 4H17.6" fill="none" stroke="#d9dbdd" stroke-width="2.150"/><path d="M19.2 10.6c.4-2 2-3.1 4-3.1 2.300 0 4 1.300 4 3.300 0 1.500-.8 2.300-2 3.100-1 .7-1.400 1.200-1.400 2.400" fill="none" stroke="#d9dbdd" stroke-width="2.900"/><circle cx="23.700" cy="20.700" r="1.900" fill="#d9dbdd"/></svg>
<div class="row" style="top:1154px">
<span style="left:230.4px">ReactViewGroup</span>
</div>
<svg style="left:193.8px;top:1171.9px" width="30" height="24" viewBox="0 0 30 24"><path d="M27 7.2V5.2a4 4 0 0 0-4-4H5.2a4 4 0 0 0-4 4v10.6a4 4 0 0 0 4 4H17.6" fill="none" stroke="#d9dbdd" stroke-width="2.150"/><path d="M19.2 10.6c.4-2 2-3.1 4-3.1 2.300 0 4 1.300 4 3.300 0 1.500-.8 2.300-2 3.100-1 .7-1.400 1.200-1.400 2.400" fill="none" stroke="#d9dbdd" stroke-width="2.900"/><circle cx="23.700" cy="20.700" r="1.900" fill="#d9dbdd"/></svg>
<div class="row" style="top:1210px">
<span style="left:200.4px">ReactViewGroup</span>
</div>
<svg style="left:163.8px;top:1227.9px" width="30" height="24" viewBox="0 0 30 24"><path d="M27 7.2V5.2a4 4 0 0 0-4-4H5.2a4 4 0 0 0-4 4v10.6a4 4 0 0 0 4 4H17.6" fill="none" stroke="#d9dbdd" stroke-width="2.150"/><path d="M19.2 10.6c.4-2 2-3.1 4-3.1 2.300 0 4 1.300 4 3.300 0 1.500-.8 2.300-2 3.100-1 .7-1.400 1.200-1.400 2.400" fill="none" stroke="#d9dbdd" stroke-width="2.900"/><circle cx="23.700" cy="20.700" r="1.900" fill="#d9dbdd"/></svg>
<div class="row" style="top:1266px"><span style="right:757px;left:auto">ReactViewGroup</span></div>
<div class="row" style="top:1322px"><span style="right:817px;left:auto">ViewGroup</span></div>
<div class="row" style="top:1378px"><span style="right:877.5px;left:auto">Group</span></div>
<div class="row" style="top:1434px"><span style="right:824.5px;left:auto">gingOverlay</span></div>
<div class="row" style="top:1490px"><span style="right:907.3px;left:auto">roup</span></div>
<div class="gl" style="left:113px;top:146px;width:2px;height:1093px"></div>
<div class="gl" style="left:143px;top:202px;width:2px;height:981px"></div>
<div class="gl" style="left:173px;top:258px;width:2px;height:29px"></div>
<div class="gl" style="left:203px;top:314px;width:2px;height:29px"></div>
<div class="gl" style="left:233px;top:370px;width:2px;height:85px"></div>
<div class="gl" style="left:263px;top:482px;width:2px;height:29px"></div>
<div class="gl" style="left:293px;top:538px;width:2px;height:29px"></div>
<div class="gl" style="left:323px;top:594px;width:2px;height:29px"></div>
<div class="gl" style="left:353px;top:650px;width:2px;height:477px"></div>
<div class="gl" style="left:383px;top:706px;width:2px;height:365px"></div>
<div class="gl" style="left:413px;top:762px;width:2px;height:253px"></div>
<div class="gl" style="left:443px;top:818px;width:2px;height:29px"></div>
<div class="gl" style="left:83px;top:90px;width:2px;height:29px"></div>
<div class="gl" style="left:85px;top:117px;width:16px;height:2px"></div>
<div class="gl" style="left:115px;top:173px;width:16px;height:2px"></div>
<div class="gl" style="left:145px;top:229px;width:16px;height:2px"></div>
<div class="gl" style="left:175px;top:285px;width:16px;height:2px"></div>
<div class="gl" style="left:205px;top:341px;width:16px;height:2px"></div>
<div class="gl" style="left:235px;top:397px;width:39px;height:2px"></div>
<div class="gl" style="left:235px;top:453px;width:16px;height:2px"></div>
<div class="gl" style="left:265px;top:509px;width:16px;height:2px"></div>
<div class="gl" style="left:295px;top:565px;width:16px;height:2px"></div>
<div class="gl" style="left:325px;top:621px;width:16px;height:2px"></div>
<div class="gl" style="left:355px;top:677px;width:16px;height:2px"></div>
<div class="gl" style="left:385px;top:733px;width:16px;height:2px"></div>
<div class="gl" style="left:415px;top:789px;width:16px;height:2px"></div>
<div class="gl" style="left:445px;top:845px;width:16px;height:2px"></div>
<div class="gl" style="left:415px;top:901px;width:39px;height:2px"></div>
<div class="gl" style="left:415px;top:957px;width:39px;height:2px"></div>
<div class="gl" style="left:415px;top:1013px;width:16px;height:2px"></div>
<div class="gl" style="left:385px;top:1069px;width:16px;height:2px"></div>
<div class="gl" style="left:355px;top:1125px;width:16px;height:2px"></div>
<div class="gl" style="left:145px;top:1181px;width:39px;height:2px"></div>
<div class="gl" style="left:115px;top:1237px;width:39px;height:2px"></div>
<div class="gl" style="left:113px;top:818px;width:2px;height:56px;background:#40555e"></div>
<div class="gl" style="left:143px;top:818px;width:2px;height:56px;background:#40555e"></div>
<div class="gl" style="left:353px;top:818px;width:2px;height:56px;background:#40555e"></div>
<div class="gl" style="left:383px;top:818px;width:2px;height:56px;background:#40555e"></div>
<div class="gl" style="left:413px;top:818px;width:2px;height:56px;background:#40555e"></div>
<div class="gl" style="left:443px;top:818px;width:2px;height:29px;background:#40555e"></div>
<div class="gl" style="left:445px;top:845px;width:16px;height:2px;background:#40555e"></div>
<div class="gl" style="left:332px;top:74px;width:2px;height:3px;background:#6890a6"></div>
<div class="abs" style="left:0;top:1546px;width:952px;height:28px;background:#263239"></div>
<div class="abs" style="left:188px;top:1552px;width:760px;height:16px;border-radius:8px;background:#17615f"></div>
</div>
<div class="vdiv" style="left:952px"></div>
<div class="abs" style="left:954px;top:0;width:1818px;height:74px;border-bottom:2px solid #2d3d47"></div>
<svg style="left:989px;top:23px" width="28" height="28" viewBox="0 0 28 28"><path d="M2.200 24.500V4.500a2.500 2.500 0 0 1 2.500-2.500H13.500a2.500 2.500 0 0 1 2.500 2.500V11.500" fill="none" stroke="#d5d7da" stroke-width="2.200"/><path d="M2.200 24.300H8" stroke="#d5d7da" stroke-width="2.200"/><path d="M7.500 6.500H11" stroke="#d5d7da" stroke-width="2"/><rect x="10.500" y="14.500" width="14.500" height="8.500" rx="1.500" fill="none" stroke="#a63df2" stroke-width="2.200"/><path d="M10 26H25.500" stroke="#a63df2" stroke-width="2"/></svg>
<div class="abs" style="left:1021px;top:0;line-height:74px;font-size:27px;letter-spacing:-.05px;color:#b9c7ce;white-space:nowrap">Pixel 9 Pro API 35</div>
<svg style="left:1251px;top:33px" width="19" height="13.5" viewBox="-2 -2 19 13.5"><path d="M0 0L7.5 8.5L15 0" fill="none" stroke="#4db1e3" stroke-width="2.8"/></svg>
<div class="abs" style="left:1288px;top:16px;width:2px;height:40px;background:#2f3e48"></div>
<svg style="left:1305px;top:24px" width="34" height="24" viewBox="0 0 34 24"><path d="M1.500 12C5 4.800 10.500 1.600 17 1.600S29 4.800 32.500 12C29 19.200 23.500 22.400 17 22.400S5 19.200 1.500 12Z" fill="none" stroke="#ced0d6" stroke-width="2.4"/><circle cx="17" cy="12" r="4.800" fill="none" stroke="#ced0d6" stroke-width="2.4"/></svg>
<svg style="left:1361px;top:23px" width="32" height="30" viewBox="0 0 32 30"><g fill="none" stroke-width="2.200"><path d="M2.800 18.500V5.500a2.500 2.500 0 0 1 2.500-2.500H15.500a2.500 2.500 0 0 1 2.500 2.500" stroke="#d5d7da"/><path d="M14.500 21.300H9a2.500 2.500 0 0 1-2.500-2.500V9.200a2.500 2.500 0 0 1 2.500-2.500H19.200a2.500 2.500 0 0 1 2.500 2.500V12" stroke="#d5d7da"/><path d="M21.900 28.600V14.500M15.500 20.800L21.900 14.300L28.300 20.800" stroke="#4a9ff0" stroke-width="2.400"/></g></svg>
<svg style="left:1413px;top:21px" width="28" height="32" viewBox="0 0 28 32"><g fill="none" stroke="#d5d7da" stroke-width="2.200"><path d="M13 24.500H4a2.500 2.500 0 0 1-2.500-2.500V4a2.500 2.500 0 0 1 2.500-2.500H13a2.500 2.500 0 0 1 2.500 2.500V8"/><path d="M12 10.500V26.500H19M12 18.500H19M12 10.500H19"/></g><circle cx="21.500" cy="10.500" r="3.300" fill="#d5d7da"/><circle cx="21.500" cy="18.500" r="3.300" fill="#d5d7da"/><circle cx="21.500" cy="26.500" r="3.300" fill="#d5d7da"/></svg>
<div class="abs" style="left:1458px;top:16px;width:2px;height:40px;background:#2f3e48"></div>
<div class="abs" style="left:1470px;top:14px;width:44px;height:44px;border-radius:9px;background:#164c4f;border:2px solid #17726f"></div>
<svg style="left:1479px;top:23px" width="30" height="28" viewBox="0 0 30 28"><g fill="none" stroke-width="2.200"><path d="M9 24H4a2.500 2.500 0 0 1-2.500-2.500V4a2.500 2.500 0 0 1 2.500-2.500H13a2.500 2.500 0 0 1 2.500 2.500V10" stroke="#d5d7da"/><path d="M12.300 19.800A5.800 5.800 0 0 1 22.500 15.300M24.300 17.800A5.800 5.800 0 0 1 14 22.300" stroke="#4a9ff0" stroke-width="2.400"/></g><path d="M19.800 13.600L24.800 12.600L24.300 17.800Z" fill="#4a9ff0"/><path d="M16.800 24.200L11.800 25L12.300 19.800Z" fill="#4a9ff0"/></svg>
<svg style="left:1527px;top:22px" width="34" height="28" viewBox="0 0 34 28"><g fill="none" stroke="#4b5359" stroke-width="2.400"><path d="M6 15A11 11 0 0 1 26 8.500"/><path d="M28 13A11 11 0 0 1 8 19.500"/><path d="M1.500 11L6 15.500L10.500 11"/><path d="M23.500 17L28 12.500L32.500 17"/></g></svg>
<div class="abs" style="left:1576px;top:16px;width:2px;height:40px;background:#2f3e48"></div>
<div class="abs" style="left:1584px;top:12px;width:612px;height:48px;background:#25313a"></div>
<div class="abs" style="left:1595px;top:12px;line-height:46px;font-size:27px;letter-spacing:-.05px;color:#acbbc3;white-space:nowrap">Layer Spacing:</div>
<div class="abs" style="left:1808px;top:32px;width:358px;height:6px;background:#304149"></div>
<svg style="left:1863px;top:17px" width="33" height="39" viewBox="0 0 33 39"><path d="M0 5a5 5 0 0 1 5-5H28a5 5 0 0 1 5 5V21.500L16.500 38.500L0 21.500Z" fill="#009688"/></svg>
<div style="position:absolute;left:2688px;width:55px;border:2px solid #3b4045;border-radius:7px;top:1237px;height:59px"></div>
<div style="position:absolute;left:2688px;width:55px;border:2px solid #3b4045;border-radius:7px;top:1304px;height:59px"></div>
<div style="position:absolute;left:2688px;width:55px;border:2px solid #3b4045;border-radius:7px;top:1372px;height:163px"></div>
<svg style="left:2702px;top:1251px" width="28" height="30" viewBox="0 0 28 30"><path d="M9.500 16V5.500a2 2 0 0 1 4 0V13M13.500 13V3.500a2 2 0 0 1 4 0V13M17.500 13V5.500a2 2 0 0 1 4 0V14M21.500 14V9.500a2 2 0 0 1 4 0V19c0 6-4 9.500-9 9.500-4 0-6.500-1.500-9-5L2.500 17.500c-1.200-1.800 1-3.800 3-2.200L9.500 19" fill="none" stroke="#ced0d6" stroke-width="2.200" stroke-linejoin="round"/></svg>
<svg style="left:2703px;top:1321px" width="28" height="28" viewBox="0 0 28 28"><g fill="none" stroke-width="2.200"><path d="M16.500 9V4a2.500 2.500 0 0 0-2.500-2.500H4a2.500 2.500 0 0 0-2.500 2.500V22a2.500 2.500 0 0 0 2.500 2.500H14a2.500 2.500 0 0 0 2.500-2.500" stroke="#ced0d6"/><path d="M8 16H20.500a5 5 0 0 1 0 10H18M13.500 10.500L8 16L13.500 21.500" stroke="#4a9ff0" stroke-width="2.400"/></g></svg>
<div class="abs" style="left:2706px;top:1400px;width:20px;height:3px;background:#3e9fb5"></div>
<div class="abs" style="left:2714px;top:1392px;width:3px;height:20px;background:#3e9fb5"></div>
<div class="abs" style="left:2706px;top:1452px;width:20px;height:3px;background:#e2555b"></div>
<svg style="left:2701px;top:1494px" width="30" height="24" viewBox="0 0 30 24"><rect x="1.200" y="1.200" width="27.600" height="21.600" rx="1.500" fill="none" stroke="#5b5e62" stroke-width="2.400"/><path d="M6.500 11V6.500H12M23.500 13V17.500H18" fill="none" stroke="#5b5e62" stroke-width="2.400"/></svg>
<div class="vdiv" style="left:2772px"></div>
<div id="right" class="abs">
<div class="hdr"><span class="t" style="left:10px;letter-spacing:.5px">Attributes</span>
<svg style="left:363px;top:24px" width="26" height="26" viewBox="0 0 26 26"><circle cx="9.6" cy="9.6" r="7.6" fill="none" stroke="#5fa9d6" stroke-width="2.6"/><path d="M15.2 15.2L24.2 23.6" stroke="#5fa9d6" stroke-width="3" fill="none"/></svg>
<svg style="left:424px;top:24px" width="8" height="26" viewBox="0 0 8 26"><circle cx="4" cy="4.500" r="2.800" fill="#e4e6e8"/><circle cx="4" cy="12.200" r="2.800" fill="#e4e6e8"/><circle cx="4" cy="20" r="2.800" fill="#e4e6e8"/></svg>
<div class="abs" style="left:469px;top:33.500px;width:22px;height:5px;background:#e4e6e8"></div>
</div>
<div class="abs" style="left:0;top:74px;width:520px;height:50px;border-bottom:2px solid #2a353d"></div>
<svg style="left:7px;top:87px" width="30" height="24" viewBox="0 0 30 24"><path d="M27 7.2V5.2a4 4 0 0 0-4-4H5.2a4 4 0 0 0-4 4v10.6a4 4 0 0 0 4 4H17.6" fill="none" stroke="#d9dbdd" stroke-width="2.150"/><path d="M19.2 10.6c.4-2 2-3.1 4-3.1 2.300 0 4 1.300 4 3.300 0 1.500-.8 2.300-2 3.100-1 .7-1.400 1.200-1.400 2.400" fill="none" stroke="#d9dbdd" stroke-width="2.900"/><circle cx="23.700" cy="20.700" r="1.900" fill="#d9dbdd"/></svg>
<div class="abs" style="left:47px;top:74px;line-height:50px;color:#648a9e;white-space:nowrap">ReactScrollView</div>
<div class="abs" style="right:10px;top:74px;line-height:50px;color:#b3c2ca;white-space:nowrap;letter-spacing:0">&lt;unnamed&gt;</div>
<div class="trow" style="top:124px"><span class="n">x</span><span class="v">0dp</span></div>
<div class="cdiv" style="top:125px;height:48px"></div>
<div class="trow" style="top:172px"><span class="n">y</span><span class="v">116dp</span></div>
<div class="cdiv" style="top:173px;height:48px"></div>
<div class="trow" style="top:220px"><span class="n">width</span><span class="v">426dp</span></div>
<div class="cdiv" style="top:221px;height:48px"></div>
<div class="trow" style="top:268px"><span class="n">height</span><span class="v">812dp</span></div>
<div class="cdiv" style="top:269px;height:48px"></div>
<div class="thead" style="top:316px"><b>Layout</b></div>
<svg style="left:14px;top:333px" width="20" height="14" viewBox="-2 -2 20 14"><path d="M0 0L8.0 9L16 0" fill="none" stroke="#5e8aa0" stroke-width="2.6"/></svg>
<div class="trow" style="top:368px"><span class="n">layout_width</span><span class="v">wrap_content</span></div>
<div class="cdiv" style="top:369px;height:48px"></div>
<div class="trow" style="top:416px"><span class="n">layout_height</span><span class="v">wrap_content</span></div>
<div class="cdiv" style="top:417px;height:48px"></div>
<div class="thead" style="top:464px"><b>All Attributes</b></div>
<svg style="left:14px;top:481px" width="20" height="14" viewBox="-2 -2 20 14"><path d="M0 0L8.0 9L16 0" fill="none" stroke="#5e8aa0" stroke-width="2.6"/></svg>
<div class="trow" style="top:516px"><span class="n">accessibilityF...</span><span class="v">false</span></div>
<div class="cdiv" style="top:517px;height:48px"></div>
<div class="trow" style="top:564px"><span class="n">accessibility...</span><span class="v">false</span></div>
<div class="cdiv" style="top:565px;height:48px"></div>
<div class="trow" style="top:612px"><span class="n">accessibilityL...</span><span class="v">none</span></div>
<div class="cdiv" style="top:613px;height:48px"></div>
<div class="trow" style="top:660px"><span class="n">activated</span><span class="v">false</span></div>
<div class="cdiv" style="top:661px;height:48px"></div>
<div class="trow" style="top:708px"><span class="n">addStatesFro...</span><span class="v">false</span></div>
<div class="cdiv" style="top:709px;height:48px"></div>
<div class="trow" style="top:756px"><span class="n">alpha</span><span class="v">1.0</span></div>
<div class="cdiv" style="top:757px;height:48px"></div>
<div class="trow" style="top:804px"><span class="n">alwaysDrawn...</span><span class="v">true</span></div>
<div class="cdiv" style="top:805px;height:48px"></div>
<div class="trow" style="top:852px"><span class="n">animationCac...</span><span class="v">true</span></div>
<div class="cdiv" style="top:853px;height:48px"></div>
<div class="trow" style="top:900px"><span class="n">baseline</span><span class="v">-1</span></div>
<div class="cdiv" style="top:901px;height:48px"></div>
<div class="trow" style="top:948px"><span class="n">clickable</span><span class="v">false</span></div>
<div class="cdiv" style="top:949px;height:48px"></div>
<div class="trow" style="top:996px"><span class="n">clipChildren</span><span class="v">false</span></div>
<div class="cdiv" style="top:997px;height:48px"></div>
<div class="trow sel" style="top:1044px"><span class="n">clipToPadding</span><span class="v">false</span></div>
<div class="cdiv" style="top:1045px;height:48px"></div>
<div class="trow" style="top:1092px"><span class="n">contextClicka...</span><span class="v">false</span></div>
<div class="cdiv" style="top:1093px;height:48px"></div>
<div class="trow" style="top:1140px"><span class="n">defaultFocus...</span><span class="v">true</span></div>
<div class="cdiv" style="top:1141px;height:48px"></div>
<div class="trow" style="top:1188px"><span class="n">descendantF...</span><span class="v">afterDescendants</span></div>
<div class="cdiv" style="top:1189px;height:48px"></div>
<div class="trow" style="top:1236px"><span class="n">drawingCach...</span><span class="v">auto</span></div>
<div class="cdiv" style="top:1237px;height:48px"></div>
<div class="trow" style="top:1284px"><span class="n">duplicatePare...</span><span class="v">false</span></div>
<div class="cdiv" style="top:1285px;height:48px"></div>
<div class="trow" style="top:1332px"><span class="n">elevation</span><span class="v">0dp</span></div>
<div class="cdiv" style="top:1333px;height:48px"></div>
<div class="trow" style="top:1380px"><span class="n">enabled</span><span class="v">true</span></div>
<div class="cdiv" style="top:1381px;height:48px"></div>
<div class="trow" style="top:1428px"><span class="n">fadingEdgeL...</span><span class="v">0dp</span></div>
<div class="cdiv" style="top:1429px;height:48px"></div>
<div class="trow" style="top:1476px"><span class="n">fillViewport</span><span class="v">false</span></div>
<div class="cdiv" style="top:1477px;height:48px"></div>
<div class="trow" style="top:1524px"><span class="n">filterTouches...</span><span class="v">false</span></div>
<div class="cdiv" style="top:1525px;height:48px"></div>
<div class="trow" style="top:1572px"><span class="n"></span><span class="v"></span></div>
<div class="cdiv" style="top:1573px;height:48px"></div>
<div class="abs" style="left:496px;top:130px;width:16px;height:442px;border-radius:8px;background:#156a66"></div>
<div class="abs" style="left:518px;top:0;width:2px;height:1574px;background:#2a3840"></div>
</div>
<div class="abs" style="left:954px;top:1572px;width:1818px;height:2px;background:#2a3840"></div>
</div></body></html>
